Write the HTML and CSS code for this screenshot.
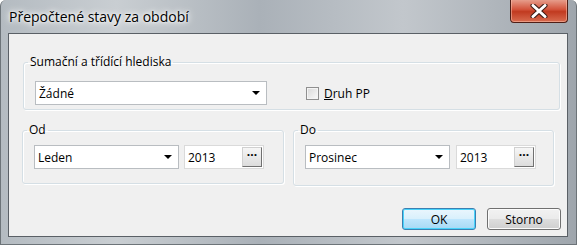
FILE: index.html
```html
<!DOCTYPE html>
<html lang="cs">
<head>
    <meta charset="UTF-8">
    <title>Přepočtené stavy za období</title>
    <link rel="stylesheet" href="styles.css">
</head>
<body>
    <div class="window">
        <div class="titlebar">
            <span class="title">Přepočtené stavy za období</span>
            <div class="close-button">
                <svg width="22" height="14" viewBox="0 0 22 14">
                    <path d="M5 1.5 L17 12.5 M17 1.5 L5 12.5" stroke="#3a1a14" stroke-width="5" stroke-linecap="round"/>
                    <path d="M5 1.5 L17 12.5 M17 1.5 L5 12.5" stroke="#ffffff" stroke-width="3" stroke-linecap="round"/>
                </svg>
            </div>
        </div>
        <div class="client">
            <fieldset class="group group-main">
                <legend>Sumační a třídící hlediska</legend>
                <div class="group-row">
                    <div class="combo combo-wide">
                        <span>Žádné</span>
                        <span class="arrow"></span>
                    </div>
                    <label class="check">
                        <span class="check-box"></span>
                        <span><u>D</u>ruh PP</span>
                    </label>
                </div>
            </fieldset>

            <div class="period-row">
                <fieldset class="group group-from">
                    <legend>Od</legend>
                    <div class="group-row">
                        <div class="combo combo-month">
                            <span>Leden</span>
                            <span class="arrow"></span>
                        </div>
                        <div class="year">
                            <span>2013</span>
                            <span class="dots">···</span>
                        </div>
                    </div>
                </fieldset>
                <fieldset class="group group-to">
                    <legend>Do</legend>
                    <div class="group-row">
                        <div class="combo combo-month">
                            <span>Prosinec</span>
                            <span class="arrow"></span>
                        </div>
                        <div class="year">
                            <span>2013</span>
                            <span class="dots">···</span>
                        </div>
                    </div>
                </fieldset>
            </div>

            <div class="buttons">
                <button class="btn btn-default">OK</button>
                <button class="btn">Storno</button>
            </div>
        </div>
    </div>
</body>
</html>
```
FILE: styles.css
```css
body {
    margin: 0;
    font-family: "Segoe UI", "Open Sans", sans-serif;
    font-size: 12px;
    color: #000;
}

.window {
    width: 577px;
    height: 245px;
    box-sizing: border-box;
    padding: 0 8px 8px 7px;
    background: linear-gradient(90deg, #b4bbc1 0%, #c9ced2 20%, #aab1b8 45%, #c2c7cc 70%, #9fa6ad 100%);
    border-radius: 6px 6px 0 0;
    border: 1px solid #6d7479;
    border-top: none;
}

.titlebar {
    height: 33px;
    display: flex;
    justify-content: space-between;
    align-items: flex-start;
}

.title {
    font-size: 14px;
    margin-top: 7px;
    margin-left: 1px;
    color: #000;
    text-shadow: 0 0 6px #fff, 0 0 10px #fff, 0 0 3px #fff;
}

.close-button {
    width: 58px;
    height: 24px;
    box-sizing: border-box;
    margin-top: -1px;
    margin-right: 0;
    display: flex;
    align-items: center;
    justify-content: center;
    border: 1px solid #4f1e16;
    border-top: none;
    border-radius: 0 0 4px 4px;
    background: linear-gradient(#e8a493 0%, #d3543c 45%, #c13a20 55%, #d86c50 100%);
    box-shadow: inset 0 0 0 1px rgba(255, 200, 180, 0.5);
}

.client {
    height: 204px;
    box-sizing: border-box;
    border: 1px solid #5a6066;
    background: #f0f0f0;
    padding: 20px 6px 0 13px;
}

.group {
    margin: 0;
    border: 1px solid #d5dfe5;
    border-radius: 3px;
    box-shadow: inset 1px 1px 0 #fff, 1px 1px 0 #fff;
    box-sizing: border-box;
}

.group legend {
    padding: 0 2px;
    margin-left: -7px;
    line-height: 16px;
}

.group-main {
    width: 537px;
    margin-left: 1px;
    padding: 11px 11px 4px 11px;
}

.group-row {
    display: flex;
    align-items: center;
}

.combo {
    height: 24px;
    box-sizing: border-box;
    border: 1px solid #b9bdc1;
    background: #fff;
    display: flex;
    align-items: center;
    justify-content: space-between;
    padding: 0 6px 0 3px;
}

.combo-wide {
    width: 232px;
}

.combo-month {
    width: 145px;
}

.arrow {
    width: 0;
    height: 0;
    border-left: 4px solid transparent;
    border-right: 4px solid transparent;
    border-top: 4px solid #000;
}

.check {
    display: flex;
    align-items: center;
    margin-left: 39px;
}

.check-box {
    width: 13px;
    height: 13px;
    box-sizing: border-box;
    border: 1px solid #8f8f8f;
    background: linear-gradient(135deg, #d8d8d8, #fafafa);
    box-shadow: inset 0 0 0 1px #f4f4f4;
    margin-right: 5px;
}

.period-row {
    display: flex;
    margin-top: 12px;
    gap: 9px;
}

.group-from {
    width: 262px;
    height: 62px;
    padding: 7px 11px 0 11px;
}

.group-to {
    width: 261px;
    height: 64px;
    padding: 7px 11px 0 11px;
}

.group-to .year {
    margin-left: 6px;
}

.year {
    width: 80px;
    height: 24px;
    margin-left: 5px;
    box-sizing: border-box;
    border: 1px solid #dadada;
    background: #fff;
    display: flex;
    align-items: center;
    justify-content: space-between;
    padding: 0 1px 0 3px;
}

.dots {
    width: 20px;
    height: 20px;
    box-sizing: border-box;
    border: 1px solid #707070;
    border-top-color: #d0d0d0;
    border-left-color: #d0d0d0;
    background: linear-gradient(#f6f6f6, #dcdcdc);
    font-weight: bold;
    line-height: 14px;
    text-align: center;
}

.buttons {
    display: flex;
    justify-content: flex-end;
    gap: 11px;
    margin-top: 22px;
}

.btn {
    width: 74px;
    height: 22px;
    font-family: inherit;
    font-size: 12px;
    border: 1px solid #707070;
    border-radius: 3px;
    background: linear-gradient(#f2f2f2 0%, #ebebeb 48%, #dddddd 52%, #cfcfcf 100%);
    box-shadow: inset 0 0 0 1px #fcfcfc;
    padding: 0;
}

.btn-default {
    border-color: #3c7fb1;
    background: linear-gradient(#eaf6fd 0%, #d9f0fc 48%, #bee6fd 52%, #a7d9f5 100%);
    box-shadow: inset 0 0 0 1px #48d3fb;
}
```
